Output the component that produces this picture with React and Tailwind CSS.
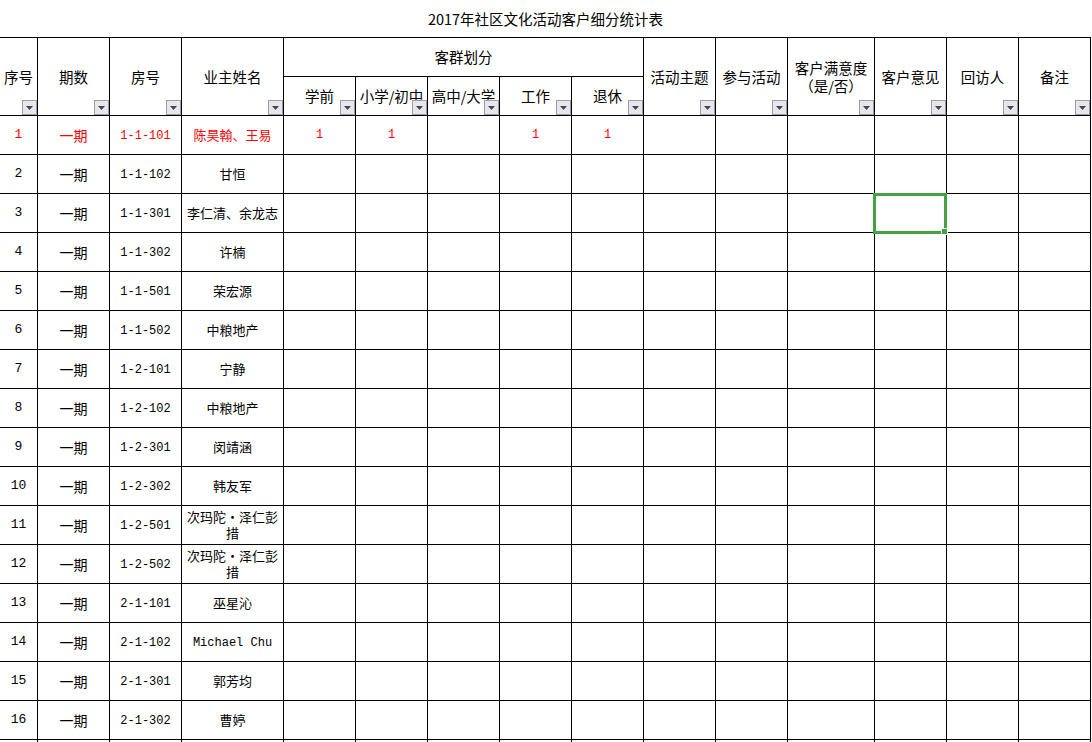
import React from 'react';

const CJK = "font-['Noto_Sans_CJK_SC',sans-serif]";
const MONO = "font-['Liberation_Mono','Noto_Sans_CJK_SC',monospace]";

const rows = [
    { no: 1, room: '1-1-101', name: '陈昊翰、王易', red: true, marks: [1, 1, null, 1, 1] },
    { no: 2, room: '1-1-102', name: '甘恒' },
    { no: 3, room: '1-1-301', name: '李仁清、余龙志' },
    { no: 4, room: '1-1-302', name: '许楠' },
    { no: 5, room: '1-1-501', name: '荣宏源' },
    { no: 6, room: '1-1-502', name: '中粮地产' },
    { no: 7, room: '1-2-101', name: '宁静' },
    { no: 8, room: '1-2-102', name: '中粮地产' },
    { no: 9, room: '1-2-301', name: '闵靖涵' },
    { no: 10, room: '1-2-302', name: '韩友军' },
    { no: 11, room: '1-2-501', name: ['次玛陀·泽仁彭', '措'] },
    { no: 12, room: '1-2-502', name: ['次玛陀·泽仁彭', '措'] },
    { no: 13, room: '2-1-101', name: '巫星沁' },
    { no: 14, room: '2-1-102', name: 'Michael Chu', latin: true },
    { no: 15, room: '2-1-301', name: '郭芳均' },
    { no: 16, room: '2-1-302', name: '曹婷' },
];

// little dropdown arrow box sitting in the corner of each header cell
function FilterBtn() {
    return (
        <div className="absolute right-0 bottom-0 w-[15px] h-[15px] border border-[#9c9cab] bg-[#e6e6eb] flex items-center justify-center z-10">
            <svg width="7" height="4" viewBox="0 0 7 4">
                <polygon points="0,0 7,0 3.5,4" fill="#45454f" />
            </svg>
        </div>
    );
}

function HeadCell({ children, className = '' }) {
    return (
        <div className={`relative bg-white flex items-center justify-center text-center text-[14.5px] leading-[18px] text-black whitespace-nowrap [text-spacing-trim:space-all] ${CJK} ${className}`}>
            <span>{children}</span>
            <FilterBtn />
        </div>
    );
}

function Cell({ children, className = '' }) {
    return (
        <div className={`relative bg-white h-[38px] flex items-center justify-center text-center ${className}`}>
            {children}
        </div>
    );
}

function Selection() {
    return (
        <div className="absolute -left-[2px] -top-[1px] -right-[1px] -bottom-[2px] border-[3px] border-[#43a343] z-20">
            <div className="absolute -right-[4px] -bottom-[4px] w-[7px] h-[7px] bg-[#43a343] border border-white" />
        </div>
    );
}

export default function App() {
    return (
        <div className="w-[1092px] h-[742px] overflow-hidden bg-white">
            {/* Title */}
            <div className={`w-[1091px] h-[37px] flex items-center justify-center text-[14.5px] text-black ${CJK}`}>
                2017年社区文化活动客户细分统计表
            </div>

            {/* Sheet */}
            <div className="w-[1091px] grid grid-cols-[37px_71px_71px_101px_71px_71px_71px_71px_71px_71px_71px_86px_71px_71px_71px] auto-rows-[38px] gap-px bg-black border-t border-r border-black">
                <HeadCell className="row-span-2">序号</HeadCell>
                <HeadCell className="row-span-2">期数</HeadCell>
                <HeadCell className="row-span-2">房号</HeadCell>
                <HeadCell className="row-span-2">业主姓名</HeadCell>
                <div className={`col-span-5 bg-white flex items-center justify-center text-[14.5px] ${CJK}`}>客群划分</div>
                <HeadCell className="row-span-2">活动主题</HeadCell>
                <HeadCell className="row-span-2">参与活动</HeadCell>
                <HeadCell className="row-span-2">客户满意度<br />（是/否）</HeadCell>
                <HeadCell className="row-span-2">客户意见</HeadCell>
                <HeadCell className="row-span-2">回访人</HeadCell>
                <HeadCell className="row-span-2">备注</HeadCell>

                <HeadCell className="overflow-hidden">学前</HeadCell>
                <HeadCell className="overflow-hidden">小学/初中</HeadCell>
                <HeadCell className="overflow-hidden">高中/大学</HeadCell>
                <HeadCell className="overflow-hidden">工作</HeadCell>
                <HeadCell className="overflow-hidden">退休</HeadCell>

                {rows.map((r) => {
                    const color = r.red ? 'text-[#ff0000]' : 'text-black';
                    const marks = r.marks || [null, null, null, null, null];
                    return (
                        <React.Fragment key={r.no}>
                            <Cell className={`${MONO} text-[13px] ${color}`}>{r.no}</Cell>
                            <Cell className={`${CJK} text-[14px] ${color}`}>一期</Cell>
                            <Cell className={`${MONO} text-[12px] pt-px ${color}`}>{r.room}</Cell>
                            <Cell className={`${r.latin ? `${MONO} text-[12px] pt-px` : `${CJK} text-[13px]`} leading-[16px] ${color}`}>
                                {Array.isArray(r.name)
                                    ? <span>{r.name[0]}<br />{r.name[1]}</span>
                                    : r.name}
                            </Cell>
                            {marks.map((m, i) => (
                                <Cell key={i} className={`${MONO} text-[12px] ${color}`}>{m}</Cell>
                            ))}
                            <Cell />
                            <Cell />
                            <Cell />
                            <Cell>{r.no === 3 && <Selection />}</Cell>
                            <Cell />
                            <Cell />
                        </React.Fragment>
                    );
                })}

                {/* partially visible next row */}
                {Array.from({ length: 15 }, (_, i) => <Cell key={'x' + i} />)}
            </div>
        </div>
    );
}
